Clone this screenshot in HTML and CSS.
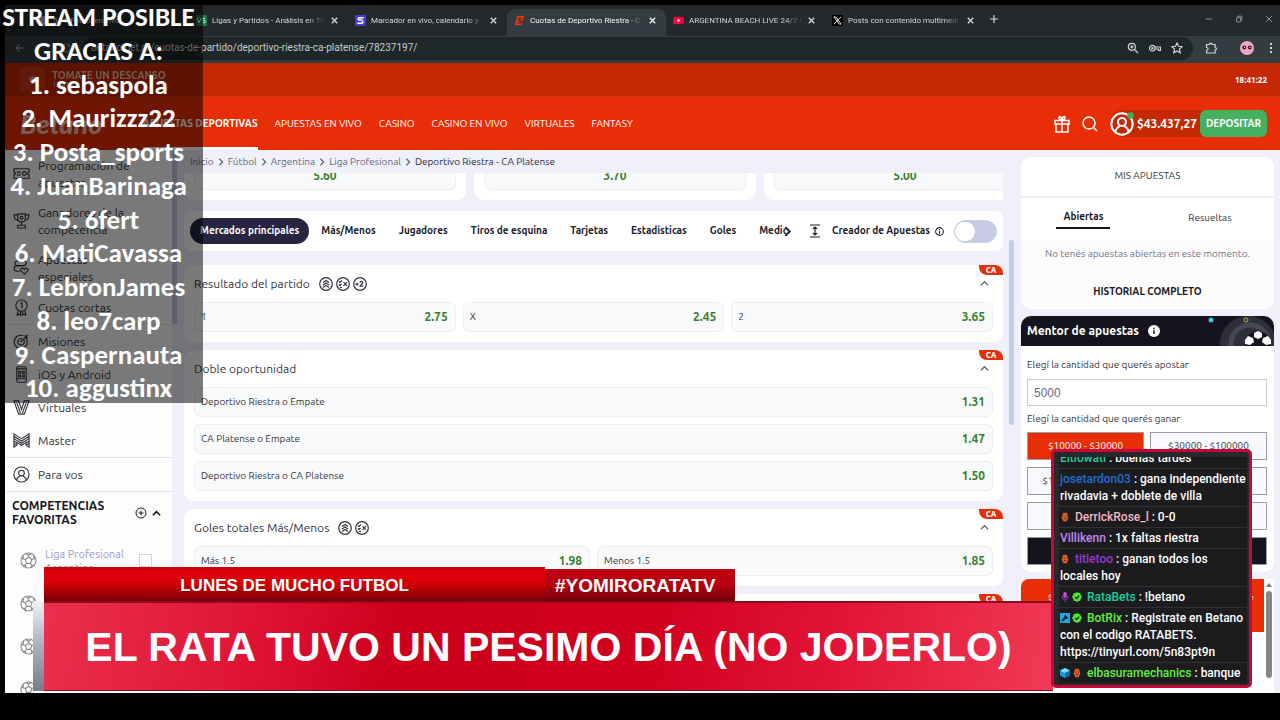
FILE: index.html
```html
<!DOCTYPE html>
<html lang="es">
<head>
    <meta charset="UTF-8">
    <meta name="viewport" content="width=device-width, initial-scale=1.0">
    <title>Cuotas de Deportivo Riestra - CA Platense</title>
    <link rel="stylesheet" href="styles.css">
</head>
<body>
    <!-- Shared icons -->
    <svg class="sprite" aria-hidden="true">
        <symbol id="i-close" viewBox="0 0 10 10"><path d="M2 2l6 6M8 2l-6 6"/></symbol>
        <symbol id="i-up" viewBox="0 0 10 10"><path d="M1 7l4-4 4 4"/></symbol>
        <symbol id="i-right" viewBox="0 0 10 10"><path d="M3 1l4 4-4 4"/></symbol>
        <symbol id="i-ball" viewBox="0 0 18 18"><circle cx="9" cy="9" r="8"/><path d="M9 5.500l3.400 2.500-1.300 4H6.900l-1.300-4zM9 5.500V3.200M12.400 8l2.300-.8M11.100 12l1.400 2M6.900 12l-1.400 2M5.600 8l-2.300-.8M6 1.600L9 3.200l3-1.600M16.800 7l-2.100.2-.4-3.300M15 14.200l-2.500-.2-1 2.600M3 14.200l2.500-.2 1 2.600M1.200 7l2.100.2.4-3.300"/></symbol>
        <symbol id="i-user" viewBox="0 0 18 18"><circle cx="9" cy="9" r="8"/><circle cx="9" cy="7.500" r="3"/><path d="M3.800 15c.5-2.500 1.800-3.500 3.500-4.500M14.200 15c-.5-2.500-1.800-3.500-3.500-4.500"/></symbol>
        <symbol id="i-boost" viewBox="0 0 14 14"><circle cx="7" cy="7" r="6.300"/><path d="M4 5.500l3-2 3 2M4 8l3-2 3 2M4 10.500l3-2 3 2"/></symbol>
        <symbol id="i-combo" viewBox="0 0 14 14"><circle cx="7" cy="7" r="6.300"/><path d="M3 4.500l1 1 2-2M3 7.500l1 1 1.500-1.500M4 10.500h2M7.500 5.200l3.500 3.600M11 5.200L7.500 8.800"/></symbol>
        <symbol id="i-plus2" viewBox="0 0 14 14"><circle cx="7" cy="7" r="6.300"/><path d="M2.500 7.200h3M4 5.700v3M7 5.500c.5-1.600 3-1.200 2.700.3-.2 1-1.700 2-2.700 3.400h3.300"/></symbol>
        <symbol id="i-info" viewBox="0 0 10 10"><circle cx="5" cy="5" r="4.300"/><path d="M5 4.500v3M5 2.500v1"/></symbol>
        <symbol id="i-kick" viewBox="0 0 10 12"><path d="M2 3l1-2h4l1 2 1 4-2 4H3L1 7z" fill="#d9622b"/><path d="M3 5h1.500M6 5h1.500M3.500 8h3" stroke="#4a1b10" stroke-width="1"/></symbol>
        <symbol id="i-check" viewBox="0 0 10 10"><path d="M5 0l1.500 1 1.900.2.300 1.800L10 5 8.700 6.800l-.3 1.900-1.900.3L5 10 3.500 9l-1.900-.3-.3-1.900L0 5l1.300-2 .3-1.800L3.500 1z" fill="#53e82c"/><path d="M3 5l1.500 1.500L7.200 3.800" fill="none" stroke="#112233" stroke-width="1.300"/></symbol>
    </svg>

    <div class="stage">
        <div class="browser">
            <div class="tabs">
                <div class="tab">
                    <svg class="fav" viewBox="0 0 12 12"><circle cx="6" cy="6" r="5" fill="#aaa"/></svg>
                    <span class="tab-title">5 - 5 Fútbol en vivo</span>
                </div>
                <div class="tab">
                    <svg class="fav" viewBox="0 0 12 12"><rect width="12" height="12" rx="1" fill="#1d7a4c"/><path d="M1.500 3.500l2 5 2-5M10 4c-1-1-3-.5-2.500.8.4 1 2.800.7 2.800 2.200 0 1.500-2.300 1.800-3.300.7" fill="none" stroke="#fff"/></svg>
                    <span class="tab-title">Ligas y Partidos - Análisis en Tiempo</span>
                    <button class="tab-close" aria-label="Cerrar"><svg class="ico"><use href="#i-close"/></svg></button>
                </div>
                <div class="tab">
                    <svg class="fav" viewBox="0 0 12 12"><rect width="12" height="12" rx="1" fill="#4839d8"/><path d="M9.500 3H4.500C3 3 3 5.500 4.500 5.500H8M2.500 9h5C9 9 9 6.500 7.500 6.500" fill="none" stroke="#fff" stroke-width="1.500"/></svg>
                    <span class="tab-title">Marcador en vivo, calendario y</span>
                    <button class="tab-close" aria-label="Cerrar"><svg class="ico"><use href="#i-close"/></svg></button>
                </div>
                <div class="tab tab-active">
                    <svg class="fav" viewBox="0 0 12 12"><path d="M3 1h8l-1 4-1 1-1 5H1l1-5 1-1z" fill="#e8390f"/><path d="M8.500 3.500H5.500L5 6h3l-.5 2.500h-4" fill="none" stroke="#3a1c14"/></svg>
                    <span class="tab-title">Cuotas de Deportivo Riestra - C</span>
                    <button class="tab-close" aria-label="Cerrar"><svg class="ico"><use href="#i-close"/></svg></button>
                </div>
                <div class="tab">
                    <svg class="fav" viewBox="0 0 12 12"><rect y="2" width="12" height="8" rx="2" fill="#f0063a"/><path d="M5 4l3 2-3 2z" fill="#fff"/></svg>
                    <span class="tab-title">ARGENTINA BEACH LIVE 24/7 🌊</span>
                    <button class="tab-close" aria-label="Cerrar"><svg class="ico"><use href="#i-close"/></svg></button>
                </div>
                <div class="tab">
                    <svg class="fav" viewBox="0 0 12 12"><rect width="12" height="12" fill="#000"/><path d="M2 2h2l6 8H8zM10 2L2 10" fill="none" stroke="#eee"/></svg>
                    <span class="tab-title">Posts con contenido multimedi</span>
                    <button class="tab-close" aria-label="Cerrar"><svg class="ico"><use href="#i-close"/></svg></button>
                </div>
                <button class="tab-new" aria-label="Nueva pestaña"><svg class="ico" viewBox="0 0 10 10"><path d="M5 1v8M1 5h8"/></svg></button>
                <div class="win-controls">
                    <button aria-label="Minimizar"><svg class="ico" viewBox="0 0 10 10"><path d="M1 5h8"/></svg></button>
                    <button aria-label="Restaurar"><svg class="ico" viewBox="0 0 10 10"><path d="M2 3.500h5v5H2zM3.500 3V1.500h5v5H7.500"/></svg></button>
                    <button aria-label="Cerrar ventana"><svg class="ico" viewBox="0 0 10 10"><path d="M1 1l8 8M9 1L1 9"/></svg></button>
                </div>
            </div>

            <div class="toolbar">
                <button class="back" aria-label="Atrás"><svg class="ico" viewBox="0 0 10 10"><path d="M9 5H1M4.500 1.500L1 5l3.500 3.500"/></svg></button>
                <button class="reload" aria-label="Recargar"><svg class="ico" viewBox="0 0 10 10"><path d="M8.500 3A4 4 0 1 0 9 5.500M9 1v2.500H6.500"/></svg></button>
                <div class="omnibox">
                    <input type="text" aria-label="Dirección" value="betano.bet.ar/cuotas-de-partido/deportivo-riestra-ca-platense/78237197/">
                    <svg class="ico" viewBox="0 0 12 12"><circle cx="4.800" cy="4.800" r="3.500"/><path d="M7.500 7.500L11 11M3.200 4.800h3.200M4.800 3.200v3.200"/></svg>
                    <svg class="ico" viewBox="0 0 12 12"><circle cx="3.300" cy="6.200" r="2.800"/><circle cx="3.300" cy="6.200" r=".6"/><path d="M5.800 5h5.700v3.500h-2V7H6"/></svg>
                    <svg class="ico" viewBox="0 0 12 12"><path d="M6 1l1.500 3.300 3.600.4-2.700 2.400.8 3.600L6 8.900l-3.200 1.800.8-3.600L.9 4.700l3.600-.4z"/></svg>
                </div>
                <svg class="ico ext" viewBox="0 0 12 12"><path d="M1.500 2.500h3a1.300 1.300 0 0 1 2.600 0h3v3a1.300 1.300 0 0 1 0 2.600v2.900H1.500V8.500c2 0 2-3 0-3z"/></svg>
                <svg class="avatar" viewBox="0 0 14 14"><circle cx="7" cy="7" r="7" fill="#f3a6c4"/><circle cx="4.300" cy="6.500" r="2" fill="#3b1d2a"/><circle cx="9.800" cy="6.500" r="2" fill="#3b1d2a"/><path d="M4 6.500h1M9.500 6.500h1" stroke="#fff"/></svg>
                <button class="menu" aria-label="Menú"><svg class="ico" viewBox="0 0 10 10"><path d="M5 0v2M5 4v2M5 8v2" stroke-width="2"/></svg></button>
            </div>

            <div class="topbar">
                <div class="break-icon"><svg viewBox="0 0 10 10"><path d="M2 5l1-3 1 2 1-3 1 3 1-2 1 3-1 4H4z" fill="#fff"/></svg></div>
                <div class="break-text"><b>TOMATE UN DESCANSO</b><small>17:41:22</small></div>
                <time>18:41:22</time>
            </div>

            <header class="header">
                <a class="logo" href="#">Betano</a>
                <nav class="nav">
                    <a class="on" href="#">Apuestas deportivas</a>
                    <a href="#">Apuestas en vivo</a>
                    <a href="#">Casino</a>
                    <a href="#">Casino en vivo</a>
                    <a href="#">Virtuales</a>
                    <a href="#">Fantasy</a>
                </nav>
                <div class="account">
                    <svg viewBox="0 0 16 18"><path d="M1 5.500h14v3.500H1zM2 9h12v8H2zM8 5.500V17M8 5C6 5 4 3.500 5 2s3 1 3 3c0-2 2-4.500 3-3s-1 3-3 3"/></svg>
                    <svg viewBox="0 0 16 18"><circle cx="7" cy="8" r="6"/><path d="M11.500 12.500L15 16"/></svg>
                    <div class="balance">
                        <svg class="user" viewBox="0 0 18 18"><use href="#i-user"/><circle cx="15.300" cy="2.700" r="2.500" fill="#3fae5a" stroke="none"/></svg>
                        <b>$43.437,27</b>
                        <button class="deposit">DEPOSITAR</button>
                    </div>
                </div>
            </header>

            <div class="page">
                <aside class="sidebar">
                    <ul class="side-list">
                        <li class="tall"><a href="#"><svg viewBox="0 0 18 18"><path d="M1 4h16v3.500a1.500 1.500 0 0 0 0 3V14H1v-3.500a1.500 1.500 0 0 0 0-3zM4 7.500h4M4 10.500h4"/><circle cx="12" cy="9" r="2"/></svg>Programación de apuestas</a></li>
                        <li class="tall"><a href="#"><svg viewBox="0 0 18 18"><path d="M5 2h8v5c0 5-8 5-8 0zM5 3H1c0 4 1 6 5 6M13 3h4c0 4-1 6-5 6M9 11v3M5 14h8v3H5z"/><circle cx="9" cy="6" r="1.500"/></svg>Ganadores de la competencia</a></li>
                        <li class="tall"><a href="#"><svg viewBox="0 0 18 18"><rect x="2" y="2" width="12" height="5" rx="2.500"/><path d="M8 7H5c-5 0-5 6 0 6h2M12 16l-4-4c0-3 3-3 4-1 1-2 4-2 4 1z"/></svg>Apuestas especiales</a></li>
                        <li class="line"><a href="#"><svg viewBox="0 0 18 18"><circle cx="9" cy="7" r="6"/><path d="M8 5l1.500-1v6M5.500 12l-1 5 2.500-1 1 1v-4M12.500 12l1 5-2.500-1-1 1v-4"/></svg>Cuotas cortas</a></li>
                        <li><a href="#"><svg viewBox="0 0 18 18"><path d="M14 5.500A7 7 0 1 1 11 3M11.500 7.500a3.500 3.500 0 1 1-2-1.500M8 9.500L16 2M13 2v3h3"/></svg>Misiones</a></li>
                        <li><a href="#"><svg viewBox="0 0 18 18"><rect x="4" y="0.800" width="10" height="16.400" rx="1.500"/><path d="M4 3h10M4 13.500h10M6 5.500h2v2H6zM10 5.500h2v2h-2zM6 9.500h2v2H6zM10 9.500h2v2h-2z"/></svg>iOS y Android</a></li>
                        <li><a href="#"><svg viewBox="0 0 18 18"><path d="M1 2h5l3 9 3-9h5l-5 14H6zM4 4l4 11M14 4l-4 11"/></svg>Virtuales</a></li>
                        <li class="line"><a href="#"><svg viewBox="0 0 18 18"><path d="M1 2l8 5 8-5v14l-3-2v-3l-5 3-5-3v3l-3 2zM1 4.500l8 5 8-5M1 7l8 5 8-5M1 9.500l3 2M17 9.500l-3 2M1 12.500l3 1M17 12.500l-3 1"/></svg>Master</a></li>
                        <li class="line"><a href="#"><svg><use href="#i-user"/></svg>Para vos</a></li>
                    </ul>
                    <div class="fav-head">
                        <h2>COMPETENCIAS FAVORITAS</h2>
                        <svg class="add" viewBox="0 0 12 12"><circle cx="6" cy="6" r="5"/><path d="M6 3.500v5M3.500 6h5"/></svg>
                        <svg><use href="#i-up"/></svg>
                    </div>
                    <ul class="fav-list">
                        <li><svg><use href="#i-ball"/></svg><label for="f1"><a href="#">Liga Profesional</a>Argentina</label><input type="checkbox" id="f1"></li>
                        <li><svg><use href="#i-ball"/></svg><label for="f2"><a href="#">Primera Nacional</a>Argentina</label><input type="checkbox" id="f2"></li>
                        <li><svg><use href="#i-ball"/></svg><label for="f3"><a href="#">Premier League</a>Inglaterra</label><input type="checkbox" id="f3"></li>
                        <li><svg><use href="#i-ball"/></svg><label for="f4"><a href="#">LaLiga</a>España</label><input type="checkbox" id="f4"></li>
                    </ul>
                </aside>
                <div class="side-scroll"></div>

                <main class="main">
                    <nav class="crumbs">
                        <a href="#">Inicio</a><svg><use href="#i-right"/></svg>
                        <a href="#">Fútbol</a><svg><use href="#i-right"/></svg>
                        <a href="#">Argentina</a><svg><use href="#i-right"/></svg>
                        <a href="#">Liga Profesional</a><svg><use href="#i-right"/></svg>
                        <span>Deportivo Riestra - CA Platense</span>
                    </nav>

                    <div class="carousel">
                        <div class="slide"><button>5.60</button></div>
                        <div class="slide"><button>3.70</button></div>
                        <div class="slide"><button>5.00</button></div>
                    </div>

                    <div class="filters">
                        <div class="chips">
                            <button class="chip-on">Mercados principales</button>
                            <button>Más/Menos</button>
                            <button>Jugadores</button>
                            <button>Tiros de esquina</button>
                            <button>Tarjetas</button>
                            <button>Estadísticas</button>
                            <button>Goles</button>
                            <button>Medio tiempo</button>
                        </div>
                        <svg class="more"><use href="#i-right"/></svg>
                        <svg class="expand" viewBox="0 0 10 14"><path d="M0 1h10M0 13h10M5 3v8M3 5l2-2 2 2M3 9l2 2 2-2"/></svg>
                        <label for="creator">Creador de Apuestas</label>
                        <svg class="info"><use href="#i-info"/></svg>
                        <input type="checkbox" id="creator" class="toggle">
                    </div>

                    <section class="market">
                        <span class="ca">CA</span>
                        <div class="market-head">
                            <h3>Resultado del partido</h3>
                            <svg><use href="#i-boost"/></svg><svg><use href="#i-combo"/></svg><svg><use href="#i-plus2"/></svg>
                            <svg class="fold"><use href="#i-up"/></svg>
                        </div>
                        <div class="odds cols-3">
                            <button>1<b>2.75</b></button>
                            <button>X<b>2.45</b></button>
                            <button>2<b>3.65</b></button>
                        </div>
                    </section>

                    <section class="market">
                        <span class="ca">CA</span>
                        <div class="market-head">
                            <h3>Doble oportunidad</h3>
                            <svg class="fold"><use href="#i-up"/></svg>
                        </div>
                        <div class="odds">
                            <button>Deportivo Riestra o Empate<b>1.31</b></button>
                            <button>CA Platense o Empate<b>1.47</b></button>
                            <button>Deportivo Riestra o CA Platense<b>1.50</b></button>
                        </div>
                    </section>

                    <section class="market">
                        <span class="ca">CA</span>
                        <div class="market-head">
                            <h3>Goles totales Más/Menos</h3>
                            <svg><use href="#i-boost"/></svg><svg><use href="#i-combo"/></svg>
                            <svg class="fold"><use href="#i-up"/></svg>
                        </div>
                        <div class="odds cols-2">
                            <button>Más 1.5<b>1.98</b></button>
                            <button>Menos 1.5<b>1.85</b></button>
                        </div>
                    </section>

                    <section class="market">
                        <span class="ca">CA</span>
                        <div class="market-head"></div>
                        <div class="odds"></div>
                    </section>
                </main>
                <div class="main-scroll"></div>

                <aside class="right">
                    <section class="bets">
                        <h2>MIS APUESTAS</h2>
                        <div class="bet-tabs">
                            <button class="sel">Abiertas</button>
                            <button>Resueltas</button>
                        </div>
                        <div class="bets-body">
                            <p>No tenés apuestas abiertas en este momento.</p>
                            <a href="#">HISTORIAL COMPLETO</a>
                        </div>
                    </section>

                    <section class="mentor">
                        <div class="mentor-head">
                            <h2>Mentor de apuestas</h2>
                            <svg class="mi" viewBox="0 0 12 12"><circle cx="6" cy="6" r="6" fill="#fff"/><path d="M6 5.200V9M6 2.800v1.400" stroke="#14141f" stroke-width="1.500"/></svg>
                            <svg class="deco" viewBox="0 0 68 30">
                                <circle cx="42" cy="28" r="28" fill="#2e2f3a"/><circle cx="44" cy="28" r="19" fill="none" stroke="#464851" stroke-width="5"/>
                                <circle cx="5" cy="4" r="2.500" fill="#3ec1e8"/><circle cx="40" cy="4" r="2" fill="none" stroke="#b5bb3a"/>
                                <circle cx="52" cy="28" r="13" fill="#14141f"/>
                                <g fill="#fff"><path d="M48 17l4-2 4 2v4l-4 2-4-2zM39 24l3-4 5 2 1 4-4 3-5-1zM65 24l-3-4-5 2-1 4 4 3 5-1z"/></g>
                            </svg>
                        </div>
                        <form class="mentor-form">
                            <label for="stake">Elegí la cantidad que querés apostar</label>
                            <input type="text" id="stake" value="5000">
                            <p>Elegí la cantidad que querés ganar</p>
                            <div class="ranges">
                                <button type="button" class="picked">$10000 - $30000</button>
                                <button type="button">$30000 - $100000</button>
                                <button type="button">$100000 - $250000</button>
                                <button type="button">$250000 - $500000</button>
                                <button type="button" class="wide" aria-label="Otro rango"></button>
                                <button type="submit" class="wide dark" aria-label="Buscar"></button>
                            </div>
                        </form>
                    </section>

                    <section class="promo">
                        <div class="promo-box"><span>$</span><span>te</span></div>
                        <div class="promo-side">
                            <svg viewBox="0 0 6 4"><path d="M0 4l3-4 3 4z" fill="#77787c"/></svg>
                            <div class="promo-scroll"></div>
                        </div>
                    </section>
                </aside>
            </div>
        </div>

        <!-- Stream overlays -->
        <div class="thanks">
            STREAM POSIBLE<br>GRACIAS A:
            <ol>
                <li>1. sebaspola</li>
                <li>2. Maurizzz22</li>
                <li>3. Posta_sports</li>
                <li>4. JuanBarinaga</li>
                <li>5. 6fert</li>
                <li>6. MatiCavassa</li>
                <li>7. LebronJames</li>
                <li>8. leo7carp</li>
                <li>9. Caspernauta</li>
                <li>10. aggustinx</li>
            </ol>
        </div>

        <div class="lower-third">
            <div class="strap">
                <span class="strap-a">LUNES DE MUCHO FUTBOL</span>
                <span class="strap-b">#YOMIRORATATV</span>
            </div>
            <div class="headline"><h1>EL RATA TUVO UN PESIMO DÍA (NO JODERLO)</h1></div>
        </div>

        <div class="chat">
            <ul>
                <li><b class="c-teal">Eitlowati</b> : buenas tardes</li>
                <li><b class="c-blue">josetardon03</b> : gana independiente rivadavia + doblete de villa</li>
                <li><svg><use href="#i-kick"/></svg> <b class="c-pink">DerrickRose_l</b> : 0-0</li>
                <li><b class="c-lilac">Villikenn</b> : 1x faltas riestra</li>
                <li><svg><use href="#i-kick"/></svg> <b class="c-purple">titietoo</b> : ganan todos los locales hoy</li>
                <li><svg viewBox="0 0 10 12"><rect x="3" y="0" width="4" height="7" rx="2" fill="#c84be8"/><path d="M1.500 5c0 5 7 5 7 0M5 9v3" fill="none" stroke="#8b25b8" stroke-width="1.500"/></svg><svg><use href="#i-check"/></svg> <b class="c-teal">RataBets</b> : !betano</li>
                <li><svg viewBox="0 0 10 10"><rect width="10" height="10" fill="#1fa8e0"/><path d="M2 8l4-4M4.500 2.500l3 3" stroke="#0b2233" stroke-width="2"/></svg><svg><use href="#i-check"/></svg> <b class="c-green">BotRix</b> : Registrate en Betano con el codigo RATABETS. <a href="#">https://tinyurl.com/5n83pt9n</a></li>
                <li><svg viewBox="0 0 10 10"><path d="M5 0l5 2.500v5L5 10 0 7.500v-5z" fill="#1b9be0"/><path d="M5 0l5 2.500L5 5 0 2.500z" fill="#7ddcff"/><path d="M5 5l5-2.500v5L5 10z" fill="#0d6cb0"/></svg><svg><use href="#i-kick"/></svg> <b class="c-green">elbasuramechanics</b> : banque</li>
            </ul>
        </div>
    </div>
</body>
</html>
```
FILE: styles.css
```css
* { box-sizing: border-box; }
body { margin: 0; background: #000; color: #33343c; font: 11px/16px Ubuntu, "Noto Sans", sans-serif; }
button, input { font: inherit; color: inherit; margin: 0; }
button { border: 0; background: none; padding: 0; cursor: pointer; white-space: nowrap; }
a { color: inherit; text-decoration: none; }
ul, ol { list-style: none; margin: 0; padding: 0; }
h1, h2, h3, p { margin: 0; font-size: inherit; font-weight: inherit; }
svg { flex: none; fill: none; stroke: currentColor; stroke-width: 1.2; }
.fav, .avatar, .mi, .deco, .break-icon svg, .promo-side svg, .chat svg { stroke: none; stroke-width: 1; }
.sprite { position: absolute; width: 0; height: 0; }

.stage { position: relative; height: 100vh; overflow: hidden; padding: 5px 0 27px 5px; }
.browser { height: 100%; display: flex; flex-direction: column; overflow: hidden; background: #eff0fa; }

/* Browser chrome */
.tabs { flex: none; height: 31px; display: flex; align-items: stretch; padding: 4px 0 0 25px; background: #24292b; color: #d3d7d9; font: 8px/14px Roboto, sans-serif; }
.tab { flex: 0 1 159px; min-width: 0; height: 23px; display: flex; align-items: center; gap: 5px; padding: 0 9px 0 7px; border-radius: 8px 8px 0 0; }
.tab-active { background: #333c40; color: #f0f3f4; height: 27px; padding-bottom: 4px; }
.fav { width: 11px; height: 11px; }
.tab-title { flex: 1; min-width: 0; overflow: hidden; white-space: nowrap; -webkit-mask-image: linear-gradient(90deg, #000 85%, transparent); mask-image: linear-gradient(90deg, #000 85%, transparent); }
.ico { width: 10px; height: 10px; display: block; }
.tab-close .ico { width: 9px; height: 9px; stroke-width: 1.5; }
.tab-new { height: 20px; margin-left: 5px; }
.win-controls { display: flex; gap: 22px; margin-left: auto; padding-right: 7px; height: 20px; color: #8d9294; }
.win-controls .ico { width: 8px; height: 8px; }

.toolbar { flex: none; height: 27px; display: flex; align-items: center; padding: 0 4px 3px 10px; background: #333c40; color: #cfd4d6; }
.back, .reload { color: #8b9092; margin-right: 36px; }
.reload { margin-right: 12px; }
.omnibox { flex: 1; height: 23px; display: flex; align-items: center; gap: 10px; padding: 0 10px 0 8px; border-radius: 12px; background: #1f2729; }
.omnibox input { flex: 1; min-width: 0; border: 0; background: none; color: #c6cbcd; font: 10px/16px Roboto, sans-serif; padding: 0; outline: 0; }
.omnibox .ico, .ext { width: 12px; height: 12px; stroke-width: 1.2; }
.ext { margin: 0 23px 0 12px; }
.avatar { width: 14px; height: 14px; margin-right: 12px; }

/* Site header */
.topbar { flex: none; height: 34px; display: flex; align-items: center; padding: 0 13px 0 15px; background: #c52805; color: #fff; border-bottom: 1px solid #d43a12; }
.break-icon { width: 25px; height: 25px; padding: 7px; border-radius: 4px; background: #d0452a; opacity: .6; }
.break-icon svg { width: 11px; height: 11px; display: block; }
.break-text { margin-left: 7px; opacity: .7; line-height: 9px; }
.break-text b, .break-text small { display: block; font-size: 10px; }
.break-text small { font-size: 7px; }
.topbar time { margin-left: auto; font: bold 8px/12px "Noto Sans", sans-serif; }

.header { flex: none; height: 53px; display: flex; align-items: center; padding: 0 13px 0 15px; background: #e82e06; color: #fff; }
.logo { width: 123px; font: italic 900 27px/30px Lato, sans-serif; opacity: .7; }
.nav { display: flex; gap: 17px; align-self: stretch; font-size: 10px; text-transform: uppercase; white-space: nowrap; }
.nav a { display: flex; align-items: center; border-bottom: 3px solid transparent; border-top: 3px solid transparent; }
.nav .on { font-weight: bold; border-bottom-color: #fff; }
.account { display: flex; align-items: center; gap: 12px; margin-left: auto; }
.account svg { width: 16px; height: 18px; stroke-width: 1.5; }
.balance { display: flex; align-items: center; gap: 3px; border-radius: 14px 8px 8px 14px; background: #c52805; font-size: 12px; }
.balance .user { width: 24px; height: 24px; }
.deposit { height: 27px; padding: 0 6px; border-radius: 6px; background: #46b060; font-size: 10px; font-weight: bold; }

.page { flex: 1; min-height: 0; display: flex; overflow: hidden; }

/* Sidebar */
.sidebar { flex: none; width: 167px; background: #fdfdfe; font-size: 12px; overflow: hidden; }
.side-list a { min-height: 33px; display: flex; align-items: center; gap: 8px; padding: 0 40px 0 8px; }
.side-list .tall a { height: 47px; line-height: 17px; }
.side-list .line { border-bottom: 1px solid #e3e4ea; }
.side-list svg, .fav-list svg { width: 17px; height: 17px; }
.fav-head { display: flex; align-items: center; gap: 5px; height: 42px; padding: 0 11px 0 7px; color: #17171f; }
.fav-head h2 { flex: 1; min-width: 0; font: bold 12px/14px Ubuntu, "Noto Sans", sans-serif; }
.fav-head svg { width: 9px; height: 9px; stroke-width: 1.8; }
.fav-head .add { width: 12px; height: 12px; stroke-width: 1; }
.fav-list { padding-top: 5px; color: #8b8c94; font-size: 11px; }
.fav-list li { display: flex; align-items: center; gap: 8px; height: 43px; padding: 0 20px 0 15px; line-height: 14px; }
.fav-list label { flex: 1; }
.fav-list a { display: block; color: #9d98cc; }
.fav-list input { appearance: none; width: 13px; height: 13px; border: 1px solid #d5d6dc; background: #fff; }
.side-scroll { flex: none; width: 5px; height: 174px; background: #c4cbe0; }

/* Main column */
.main { flex: 1; min-width: 0; padding: 0 0 0 7px; overflow: hidden; }
.crumbs { display: flex; align-items: center; gap: 3px; height: 23px; padding-left: 6px; color: #66677a; white-space: nowrap; font-size: 10px; }
.crumbs svg { width: 8px; height: 8px; stroke-width: 1.6; }
.crumbs span { color: #2c2d38; }
.carousel { display: flex; gap: 8px; overflow: hidden; }
.slide { flex: none; width: 35%; max-width: 282px; padding: 0 10px 10px; background: #fff; border-radius: 0 0 9px 9px; }
.slide button { display: flex; align-items: center; justify-content: center; width: 100%; height: 17px; padding-bottom: 10px; border: 1px solid #eceef2; border-top: 0; border-radius: 0 0 6px 6px; background: #f9fafb; color: #35802a; font-size: 12px; font-weight: bold; }
.filters { display: flex; align-items: center; height: 40px; margin: 11px 0 14px; padding: 0 6px 0 6px; border-radius: 8px; background: #fff; color: #20202a; font-size: 10px; font-weight: bold; }
.chips { flex: 1; min-width: 0; display: flex; align-items: center; gap: 23px; overflow: hidden; }
.chip-on { height: 26px; padding: 0 10px; margin-right: -11px; border-radius: 13px; background: #272540; color: #fff; }
.more { width: 11px; height: 11px; margin: 0 17px 0 -4px; stroke-width: 1.8; }
.expand { width: 10px; height: 14px; margin-right: 12px; }
.info { width: 9px; height: 9px; margin: 0 10px 0 5px; }
.toggle { appearance: none; flex: none; width: 43px; height: 23px; border-radius: 12px; border: 1px solid #c5cde5; background: radial-gradient(circle 10px at 10px 50%, #fff 95%, transparent), #c5cde5; }

.market { position: relative; margin-bottom: 8px; padding: 0 10px 10px; border-radius: 9px; background: #fff; }
.ca { position: absolute; top: 0; right: 0; width: 24px; height: 10px; border-radius: 0 8px 0 8px; background: #e0310c; color: #fff; font: bold 8px/10px "Noto Sans", sans-serif; text-align: center; }
.market-head { display: flex; align-items: center; gap: 3px; height: 37px; }
.market-head h3 { font-size: 12px; margin-right: 6px; }
.market-head svg { width: 14px; height: 14px; stroke-width: 1.2; }
.market-head .fold { width: 9px; height: 9px; margin: 0 4px 0 auto; stroke-width: 1.4; color: #66666e; }
.odds { display: grid; gap: 7px; }
.cols-2 { grid-template-columns: 1fr 1fr; }
.cols-3 { grid-template-columns: 1fr 1fr 1fr; }
.odds button { display: flex; align-items: center; justify-content: space-between; height: 30px; padding: 0 7px 0 6px; border: 1px solid #eceef1; border-radius: 6px; background: #f9fafb; font-size: 10px; }
.odds b { font-size: 12px; color: #35802a; }
.main-scroll { flex: none; width: 5px; height: 185px; margin: 90px 7px 0 6px; border-radius: 2px; background: #c4cde6; }

/* Right column */
.right { flex: none; width: 253px; margin: 7px 6px 0 0; display: flex; flex-direction: column; gap: 7px; }
.bets { flex: none; border-radius: 10px; background: #fff; text-align: center; overflow: hidden; }
.bets h2 { padding: 11px 0 12px; border-bottom: 2px solid #eff0f4; font-size: 10px; color: #33343c; }
.bet-tabs { display: flex; justify-content: space-around; height: 42px; padding: 8px 0 11px; font-size: 10px; }
.bet-tabs .sel { font-weight: bold; color: #17171f; border-bottom: 2px solid #17171f; }
.bet-tabs button { padding: 0 7px; }
.bets-body { padding: 6px 0 9px; background: #fcfcfd; }
.bets-body p { color: #71728a; font-size: 10px; margin-bottom: 21px; }
.bets-body a { font-size: 10px; font-weight: bold; color: #17171f; }
.mentor { flex: none; border-radius: 10px; background: #fff; overflow: hidden; }
.mentor-head { display: flex; align-items: center; height: 30px; padding-left: 6px; background: #14141f; color: #fff; }
.mentor-head h2 { font-size: 12px; font-weight: bold; }
.mi { width: 12px; height: 12px; margin-left: 9px; }
.deco { width: 68px; height: 30px; margin-left: auto; }
.mentor-form { padding: 11px 7px 7px 6px; font-size: 10px; }
.mentor-form label { display: block; }
.mentor-form input { display: block; width: 100%; height: 27px; margin: 6px 0 5px; padding: 0 6px; border: 1px solid #c9cad1; background: #fff; color: #6a6b84; font: 12px/16px "Liberation Sans", sans-serif; }
.ranges { display: grid; grid-template-columns: 1fr 1fr; gap: 7px 6px; margin-top: 5px; }
.ranges button { height: 28px; border: 1px solid #9a9ba3; background: #f8f9fc; }
.ranges .picked { background: #e82e06; color: #fff; }
.ranges .wide { grid-column: span 2; }
.ranges .dark { background: #14141f; }
.promo { flex: 1; display: flex; align-items: flex-start; background: #fff; border-radius: 8px 0 0 0; }
.promo-box { flex: 1; height: 53px; display: flex; justify-content: space-between; padding: 11px 10px 0 27px; border-radius: 8px 0 0 0; background: #e82e06; color: #fff; font-size: 8px; }
.promo-side { width: 10px; padding: 4px 2px 0; }
.promo-side svg { display: block; width: 6px; height: 4px; }
.promo-scroll { height: 87px; margin-top: 4px; border-radius: 3px; background: #85868a; }

/* Overlays */
.thanks { position: absolute; top: 0; left: 0; width: 203px; height: 403px; padding-right: 6px; background: rgba(0, 0, 0, .52); color: #fff; font: bold 27px/1.25 Carlito, Lato, sans-serif; text-align: center; white-space: nowrap; }
.lower-third { position: absolute; left: 33px; right: 227px; bottom: 27px; }
.strap { display: flex; align-items: flex-end; margin-left: 11px; color: #fff; font: bold 17px/32px "Liberation Sans", sans-serif; }
.strap-a { width: 501px; height: 34px; line-height: 38px; text-align: center; background: linear-gradient(#c80008, #e4000a 20%, #d00008 50%, #780005); }
.strap-b { width: 190px; height: 32px; font-size: 19px; line-height: 34px; padding-left: 10px; background: linear-gradient(#c00014, #b8000f 50%, #70000a); }
.headline { height: 92px; padding-left: 11px; background: linear-gradient(#f2f4f8, #b4bcc8 40%, #777c84) left / 11px 100% no-repeat; border-bottom: 2px solid #fff; }
.headline h1 { height: 90px; border-top: 2px solid #8e0a1e; border-bottom: 1px solid #8e0a1e; background: linear-gradient(100deg, #e9304c, #e01536 20%, #cc001c 35%, #d2001f 60%, #e21436 78%, #f03a55); color: #fff; font: bold 41px/88px "Liberation Sans", sans-serif; text-align: center; white-space: nowrap; }
.chat { position: absolute; left: 1051px; bottom: 32px; width: 201px; height: 239px; padding: 5px 2px 2px 5px; border: 3px solid #c5083a; border-radius: 5px; background: #29282b; overflow: hidden; }
.chat ul { height: 100%; display: flex; flex-direction: column; justify-content: flex-end; overflow: hidden; background: #1c1b1e; color: #fff; font: 500 12px/17px Roboto, sans-serif; }
.chat li { flex: none; padding: 2px 0 1px 1px; border-bottom: 1px solid #302f33; }
.chat li:last-child { border: 0; }
.chat b { font-weight: 500; }
.chat svg { width: 10px; height: 10px; margin-right: 2px; vertical-align: -1px; }
.c-teal { color: #1fcf9b; }
.c-blue { color: #1c70d0; }
.c-pink { color: #f3b8c4; }
.c-lilac { color: #bd8cf5; }
.c-purple { color: #9738d8; }
.c-green { color: #62f03c; }
```
